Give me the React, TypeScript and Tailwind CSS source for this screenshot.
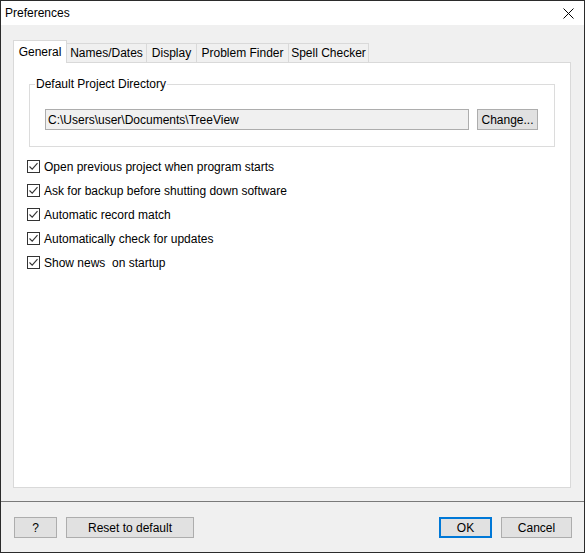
import { useState } from "react";

const TABS = [
  { label: "General", w: "w-[54px]" },
  { label: "Names/Dates", w: "w-[80px]" },
  { label: "Display", w: "w-[50px]" },
  { label: "Problem Finder", w: "w-[92px]" },
  { label: "Spell Checker", w: "w-[80px]" },
];

const OPTIONS = [
  "Open previous project when program starts",
  "Ask for backup before shutting down software",
  "Automatic record match",
  "Automatically check for updates",
  "Show news  on startup",
];

function CheckBox({ checked, onClick }: { checked: boolean; onClick: () => void }) {
  return (
    <button onClick={onClick} className="w-[13px] h-[13px] border border-[#333333] bg-white flex items-center justify-center shrink-0">
      {checked && (
        <svg width="11" height="11" viewBox="0 0 11 11">
          <path d="M1.5 5.5 L4.2 8.2 L9.5 2.2" fill="none" stroke="#333333" strokeWidth="1.1" />
        </svg>
      )}
    </button>
  );
}

function WinButton({ children, className }: { children: React.ReactNode; className?: string }) {
  return (
    <button className={"h-[21px] border border-[#adadad] bg-[#e1e1e1] text-[12px] leading-[14px] text-black flex items-center justify-center " + (className ?? "")}>
      {children}
    </button>
  );
}

export default function App() {
  const [tab, setTab] = useState(0);
  const [checks, setChecks] = useState(OPTIONS.map(() => true));

  return (
    <div className="w-[585px] h-[553px] border border-[#2b2b2b] flex flex-col bg-[#f0f0f0] text-black text-[12px] leading-[14px] font-['Liberation_Sans',Arial,sans-serif] select-none">
      {/* title bar */}
      <div className="h-[24px] bg-white flex items-center justify-between pl-[4px] pr-[10px] shrink-0">
        <span className="text-[12px]">Preferences</span>
        <svg width="11" height="11" viewBox="0 0 11 11">
          <path d="M0.5 0.5 L10.5 10.5 M10.5 0.5 L0.5 10.5" stroke="#000" strokeWidth="1" />
        </svg>
      </div>

      {/* tabs + panel */}
      <div className="flex flex-col pl-[12px] pr-[13px] pt-[15px]">
        <div className="flex items-end h-[23px] relative z-10">
          {TABS.map((t, i) =>
            i === tab ? (
              <button key={t.label} onClick={() => setTab(i)} className={"h-[23px] bg-white border border-b-0 border-[#d9d9d9] flex items-start justify-center pt-[4px] " + t.w}>
                {t.label}
              </button>
            ) : (
              <button key={t.label} onClick={() => setTab(i)} className={"h-[20px] bg-[#f0f0f0] border border-[#d9d9d9] border-l-0 flex items-start justify-center pt-[2px] " + t.w}>
                {t.label}
              </button>
            )
          )}
        </div>
        <div className="h-[426px] -mt-[1px] bg-white border border-[#d9d9d9] px-[15px] pt-[14px]">
          <fieldset className="border border-[#dcdcdc] p-0">
            <legend className="ml-[5px] px-[1px]">Default Project Directory</legend>
            <div className="flex items-center gap-[8px] mt-[18px] pl-[15px] pr-[16px] pb-[16px]">
              <div className="flex-1 h-[21px] border border-[#adadad] bg-[#f0f0f0] flex items-center pl-[2px]">
                C:\Users\user\Documents\TreeView
              </div>
              <WinButton className="w-[61px]">Change...</WinButton>
            </div>
          </fieldset>
          <div className="flex flex-col gap-[11px] mt-[13px] -ml-[2px]">
            {OPTIONS.map((o, i) => (
              <label key={o} className="flex items-center gap-[4px] h-[13px] whitespace-pre">
                <CheckBox checked={checks[i]} onClick={() => setChecks((c) => c.map((v, j) => (j === i ? !v : v)))} />
                <span>{o}</span>
              </label>
            ))}
          </div>
        </div>
      </div>

      {/* footer */}
      <div className="mt-[13px] border-t border-[#7a7a7a] flex items-start justify-between pt-[15px] pl-[13px] pr-[12px]">
        <div className="flex gap-[9px]">
          <WinButton className="w-[43px]">?</WinButton>
          <WinButton className="w-[128px]">Reset to default</WinButton>
        </div>
        <div className="flex gap-[9px]">
          <button className="w-[53px] h-[21px] border-2 border-[#0078d7] bg-[#e1e1e1] flex items-center justify-center">OK</button>
          <WinButton className="w-[71px]">Cancel</WinButton>
        </div>
      </div>
    </div>
  );
}
